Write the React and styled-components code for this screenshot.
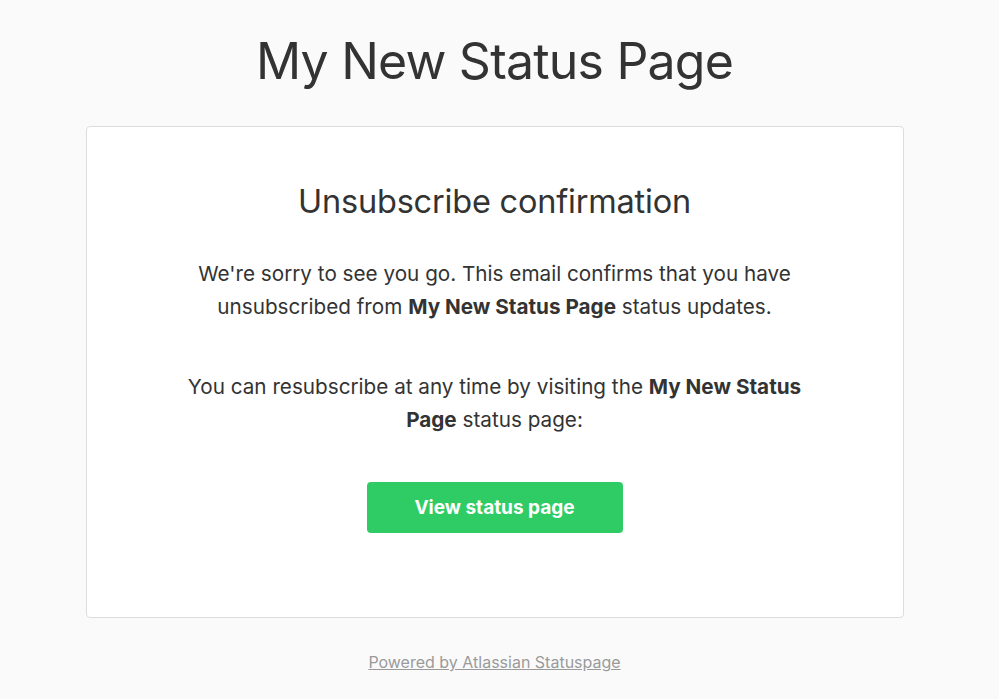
import React from "react";
import styled, { createGlobalStyle } from "styled-components";

const Global = createGlobalStyle`
  html, body {
    margin: 0;
    padding: 0;
    background: #fafafa;
    color: #333333;
    font-family: Inter, "Noto Sans", sans-serif;
  }
`;

const Page = styled.div`
  display: flex;
  flex-direction: column;
  align-items: center;
  padding-top: 26px;
  padding-right: 10px;
`;

const Title = styled.h1`
  margin: 0;
  font-size: 50px;
  font-weight: 400;
  line-height: 70px;
  letter-spacing: -0.8px;
`;

const Card = styled.div`
  box-sizing: border-box;
  width: 818px;
  height: 492px;
  margin-top: 30px;
  background: #ffffff;
  border: 1px solid #dcdcdc;
  border-radius: 4px;
  display: flex;
  flex-direction: column;
  align-items: center;
  padding-top: 53px;
`;

const Heading = styled.h2`
  margin: 0;
  font-size: 32.5px;
  font-weight: 400;
  line-height: 44px;
  letter-spacing: -0.2px;
`;

const Text = styled.p`
  margin: ${(p) => p.$top}px 0 0;
  width: 640px;
  text-align: center;
  font-size: 20.7px;
  line-height: 33px;

  strong {
    font-weight: 700;
  }
`;

const Button = styled.a`
  display: flex;
  align-items: center;
  justify-content: center;
  margin-top: 46px;
  width: 256px;
  height: 51px;
  border-radius: 4px;
  background: #2fcc66;
  color: #ffffff;
  font-size: 19px;
  font-weight: 700;
  text-decoration: none;
`;

const Footer = styled.a`
  margin-top: 34px;
  font-size: 16px;
  color: #9a9a9a;
  text-decoration: underline;
`;

export default function App() {
  return (
    <>
      <Global />
      <Page>
        <Title>My New Status Page</Title>
        <Card>
          <Heading>Unsubscribe confirmation</Heading>
          <Text $top={33}>
            We're sorry to see you go. This email confirms that you have
            unsubscribed from <strong>My New Status Page</strong> status
            updates.
          </Text>
          <Text $top={47}>
            You can resubscribe at any time by visiting the{" "}
            <strong>My New Status Page</strong> status page:
          </Text>
          <Button href="#">View status page</Button>
        </Card>
        <Footer href="#">Powered by Atlassian Statuspage</Footer>
      </Page>
    </>
  );
}
